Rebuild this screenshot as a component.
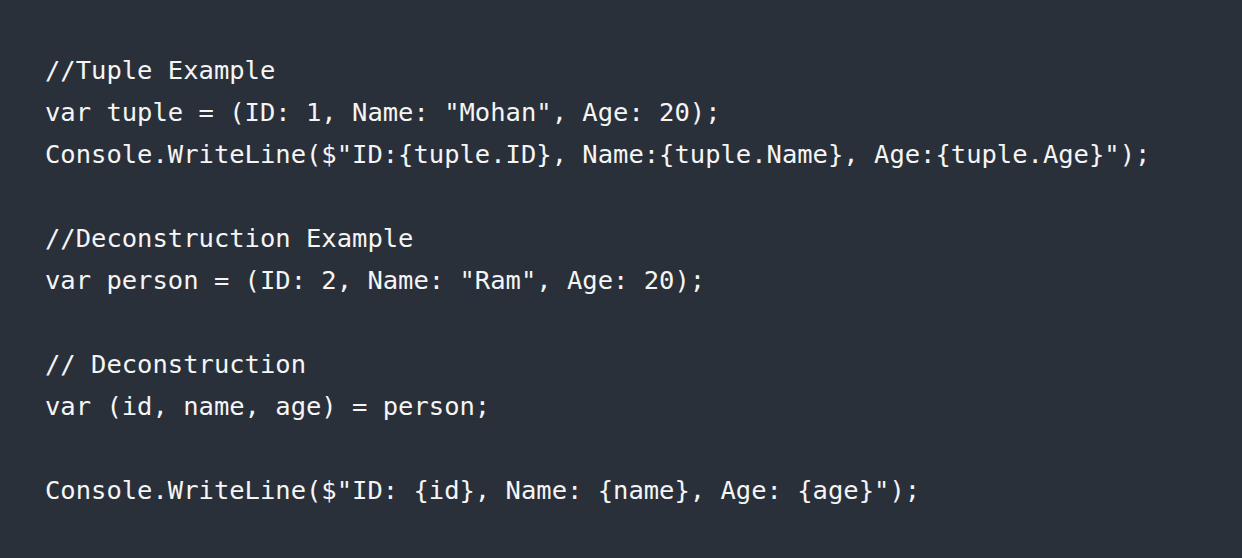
const lines = [
  "//Tuple Example",
  'var tuple = (ID: 1, Name: "Mohan", Age: 20);',
  'Console.WriteLine($"ID:{tuple.ID}, Name:{tuple.Name}, Age:{tuple.Age}");',
  "",
  "//Deconstruction Example",
  'var person = (ID: 2, Name: "Ram", Age: 20);',
  "",
  "// Deconstruction",
  "var (id, name, age) = person;",
  "",
  'Console.WriteLine($"ID: {id}, Name: {name}, Age: {age}");',
];

export default function App() {
  return (
    <div className="w-[1242px] h-[558px] bg-[#29303a] pt-[49px] pl-[45px] overflow-hidden">
      <pre className="font-['DejaVu_Sans_Mono',monospace] text-[25.5px] leading-[42px] text-[#f5f5f5]">
        {lines.map((l, i) => (
          <div key={i} className="h-[42px]">{l}</div>
        ))}
      </pre>
    </div>
  );
}
